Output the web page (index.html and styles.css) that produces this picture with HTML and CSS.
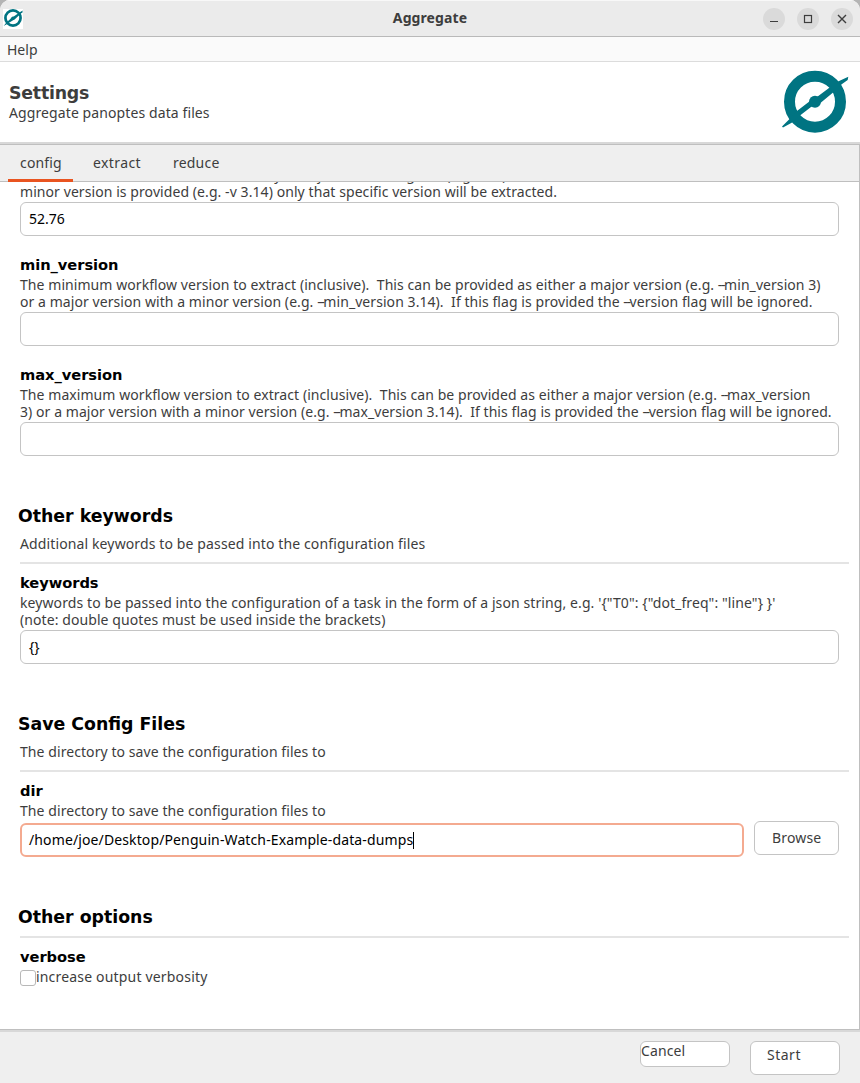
FILE: index.html
```html
<!DOCTYPE html>
<html lang="en">
<head>
<meta charset="utf-8">
<title>Aggregate</title>
<link rel="stylesheet" href="styles.css">
</head>
<body>
<div class="backdrop">
<div class="window">
  <div class="titlebar">
    <div class="app-icon">
      <svg width="20" height="20" viewBox="0 0 66 66"><circle cx="33" cy="33" r="25" fill="none" stroke="#007482" stroke-width="9"/><path d="M2 59 12 47 27 34 58 12 65 8 64 14 40 36 12 54Z" fill="#007482"/><circle cx="33" cy="34" r="6" fill="#007482"/></svg>
    </div>
    <div class="window-title"><span class="t-title">Aggregate</span></div>
    <div class="window-buttons">
      <span class="wbtn"><svg width="22" height="22"><path d="M7 13.5h8" stroke="#3d3d3d" fill="none"/></svg></span>
      <span class="wbtn"><svg width="22" height="22"><rect x="7.5" y="7.5" width="7" height="7" stroke="#3d3d3d" stroke-width="1.2" fill="none"/></svg></span>
      <span class="wbtn"><svg width="22" height="22"><path d="M7 7l8 8M15 7l-8 8" stroke="#3d3d3d" stroke-width="1.4" fill="none"/></svg></span>
    </div>
  </div>
  <div class="menubar"><span class="t-help">Help</span></div>
  <div class="header">
    <div class="header-text">
      <h1>Settings</h1>
      <p><span class="t-sub">Aggregate panoptes data files</span></p>
    </div>
    <svg class="logo" width="68" height="66" viewBox="0 0 68 66"><circle cx="34" cy="32.7" r="25.5" fill="none" stroke="#007482" stroke-width="11"/><path d="M1 57.5 8.3 50.3 15 42.7 28 32.7 37.3 27 49 18.3 57 12.5 67.3 7.7 66.7 11 60.7 15.3 53.3 22.5 40 33.5 30 38 19 46.5 10.7 53.7 2 58.5Z" fill="#007482"/><circle cx="34" cy="32.7" r="6" fill="#007482"/></svg>
  </div>
  <div class="main">
    <div class="tabs">
      <div class="tab active"><span class="t-config">config</span></div>
      <div class="tab"><span class="t-extract">extract</span></div>
      <div class="tab"><span class="t-reduce">reduce</span></div>
    </div>
    <div class="content">
      <div class="field first">
        <div class="line"><span class="t-v1">The workflow version to extract.&nbsp; If only a major version is given (e.g. -v 3) all minor versions will be extracted at once.&nbsp; If a</span></div>
        <div class="line"><span class="t-v2">minor version is provided (e.g. -v 3.14) only that specific version will be extracted.</span></div>
        <div class="input"><span class="t-num">52.76</span></div>
      </div>
      <div class="field">
        <h3>min_version</h3>
        <div class="line"><span class="t-min1">The minimum workflow version to extract (inclusive).&nbsp; This can be provided as either a major version (e.g. <span class="dd">--</span>min_version 3)</span></div>
        <div class="line"><span class="t-min2">or a major version with a minor version (e.g. <span class="dd">--</span>min_version 3.14).&nbsp; If this flag is provided the <span class="dd">--</span>version flag will be ignored.</span></div>
        <div class="input"></div>
      </div>
      <div class="field">
        <h3>max_version</h3>
        <div class="line"><span class="t-max1">The maximum workflow version to extract (inclusive).&nbsp; This can be provided as either a major version (e.g. <span class="dd">--</span>max_version</span></div>
        <div class="line"><span class="t-max2">3) or a major version with a minor version (e.g. <span class="dd">--</span>max_version 3.14).&nbsp; If this flag is provided the <span class="dd">--</span>version flag will be ignored.</span></div>
        <div class="input"></div>
      </div>

      <h2>Other keywords</h2>
      <div class="desc"><span class="t-add">Additional keywords to be passed into the configuration files</span></div>
      <div class="rule"></div>
      <div class="field">
        <h3>keywords</h3>
        <div class="line"><span class="t-kw1">keywords to be passed into the configuration of a task in the form of a json string, e.g. '{"T0": {"dot_freq": "line"} }'</span></div>
        <div class="line"><span class="t-kw2">(note: double quotes must be used inside the brackets)</span></div>
        <div class="input"><span class="t-braces">{}</span></div>
      </div>

      <h2>Save Config Files</h2>
      <div class="desc"><span class="t-dir">The directory to save the configuration files to</span></div>
      <div class="rule"></div>
      <div class="field">
        <h3>dir</h3>
        <div class="line"><span class="t-dir">The directory to save the configuration files to</span></div>
        <div class="picker">
          <div class="input focus"><span class="t-path">/home/joe/Desktop/Penguin-Watch-Example-data-dumps</span><i class="caret"></i></div>
          <div class="button browse"><span class="t-browse">Browse</span></div>
        </div>
      </div>

      <h2 class="options">Other options</h2>
      <div class="rule"></div>
      <div class="field">
        <h3>verbose</h3>
        <div class="check"><span class="box"></span><span class="t-inc">increase output verbosity</span></div>
      </div>
    </div>
  </div>
  <div class="footer">
    <div class="button cancel"><span class="t-cancel">Cancel</span></div>
    <div class="button start"><span class="t-start">Start</span></div>
  </div>
</div>
</div>
</body>
</html>
```
FILE: styles.css
```css
* { box-sizing: border-box; }
body { margin: 0; font: 14px/17px "Noto Sans", "Open Sans", sans-serif; color: #3d3d3d; }
h1, h2, h3, p { margin: 0; }
svg { display: block; }
span { white-space: nowrap; }
.backdrop { background: #b4b4b4; height: 1083px; overflow: hidden; }
.window { height: 1083px; display: flex; flex-direction: column; background: #fff; border-radius: 10px 10px 0 0; overflow: hidden; }
.titlebar { flex: none; height: 37px; display: grid; grid-template-columns: 120px 1fr 120px; align-items: center; background: #ebebeb; border-bottom: 1px solid #b9b9b9; border-top: 1px solid #f8f8f8; }
.app-icon { width: 20px; height: 20px; margin-left: 3px; background: #fff; }
.app-icon svg { margin-top: -1px; }
.window-title { text-align: center; font-weight: 700; padding-bottom: 2px; }
.window-buttons { display: flex; gap: 12px; justify-content: flex-end; padding-right: 7px; }
.wbtn { width: 22px; height: 22px; border-radius: 50%; background: #dadada; }
.menubar { flex: none; height: 25px; padding: 4px 7px; background: #fafafa; border-bottom: 1px solid #dcdcdc; }
.header { flex: none; height: 80px; display: flex; justify-content: space-between; padding: 7px 11px 0 9px; }
.header-text { padding-top: 13px; }
h1, h2 { font: 700 17.33px/22px "DejaVu Sans", sans-serif; }
h3 { font: 700 14.67px/20px "DejaVu Sans", sans-serif; color: #000; margin-bottom: 1px; letter-spacing: -0.05px; }
h1 { height: 22px; letter-spacing: -0.2px; }
h2 { color: #000; margin: 49px 0 8px -2px; }
.main { flex: none; height: 888px; border-top: 2px solid #d8d8d8; display: flex; flex-direction: column; }
.tabs { flex: none; height: 38px; display: flex; padding-left: 8px; background: #efefef; border: 1px solid #bfbfbf; border-left: 0; }
.tab { width: 65px; margin-right: 8px; padding-left: 12px; line-height: 36px; }
.tab + .tab { width: 72px; }
.active { border-bottom: 3px solid #e95420; height: 37px; position: relative; }
.content { flex: 1; min-height: 0; overflow: hidden; background: #fff; border-right: 1px solid #bfbfbf; border-bottom: 1px solid #bfbfbf; padding: 0 10px 0 20px; }
.field { margin-right: 10px; }
.first { margin-top: -16px; }
.field + .field { margin-top: 19px; }
.line { height: 17px; }
.input { height: 34px; margin-top: 2px; border: 1px solid #c4c4c4; border-radius: 6px; padding: 0 8px; line-height: 32px; color: #000; background: #fff; }
.desc { height: 18px; margin-bottom: 9px; line-height: 18px; }
.rule { height: 2px; background: #e4e4e4; margin-bottom: 9px; }
.picker { display: flex; gap: 10px; padding-top: 2px; }
.picker .input { flex: 1; margin-top: 2px; }
.focus { border: 2px solid #f4aa90; padding: 0 7px; line-height: 30px; display: flex; align-items: center; }
.caret { width: 1px; height: 17px; background: #000; }
.button { background: #fff; border: 1px solid #c4c4c4; border-radius: 6px; }
.browse { width: 85px; height: 34px; padding-left: 17px; line-height: 32px; }
.check { display: flex; height: 19px; }
.box { width: 16px; height: 16px; margin-top: 2px; border: 1px solid #b8b8b8; border-radius: 3px; background: #fff; }
.footer { flex: 1; display: flex; gap: 20px; justify-content: flex-end; align-items: flex-start; padding: 9px 20px 0 0; background: #efefef; border-top: 2px solid #d8d8d8; }
.cancel { width: 90px; height: 26px; line-height: 18px; }
.start { width: 90px; height: 34px; padding-left: 16px; line-height: 26px; }
.dd { letter-spacing: -1.4px; }

/* Tracking per text run */
.t-title { letter-spacing: 0.1px; }
.t-sub { letter-spacing: 0.1px; }
.t-config { letter-spacing: 0.17px; }
.t-extract { letter-spacing: 0.4px; }
.t-reduce { letter-spacing: 0.2px; }
.t-v1, .t-v2 { letter-spacing: 0.075px; }
.t-min1, .t-min2, .t-max1, .t-max2 { letter-spacing: 0.065px; }
.t-add { letter-spacing: 0.123px; }
.t-kw1 { letter-spacing: 0.096px; }
.t-kw2 { letter-spacing: 0.083px; }
.t-dir { letter-spacing: 0.075px; }
.t-path { letter-spacing: 0.12px; }
.t-inc { letter-spacing: 0.18px; }
.t-browse { letter-spacing: 0.15px; }
.t-cancel { letter-spacing: 0.1px; }
.t-start { letter-spacing: 0.5px; }
```
